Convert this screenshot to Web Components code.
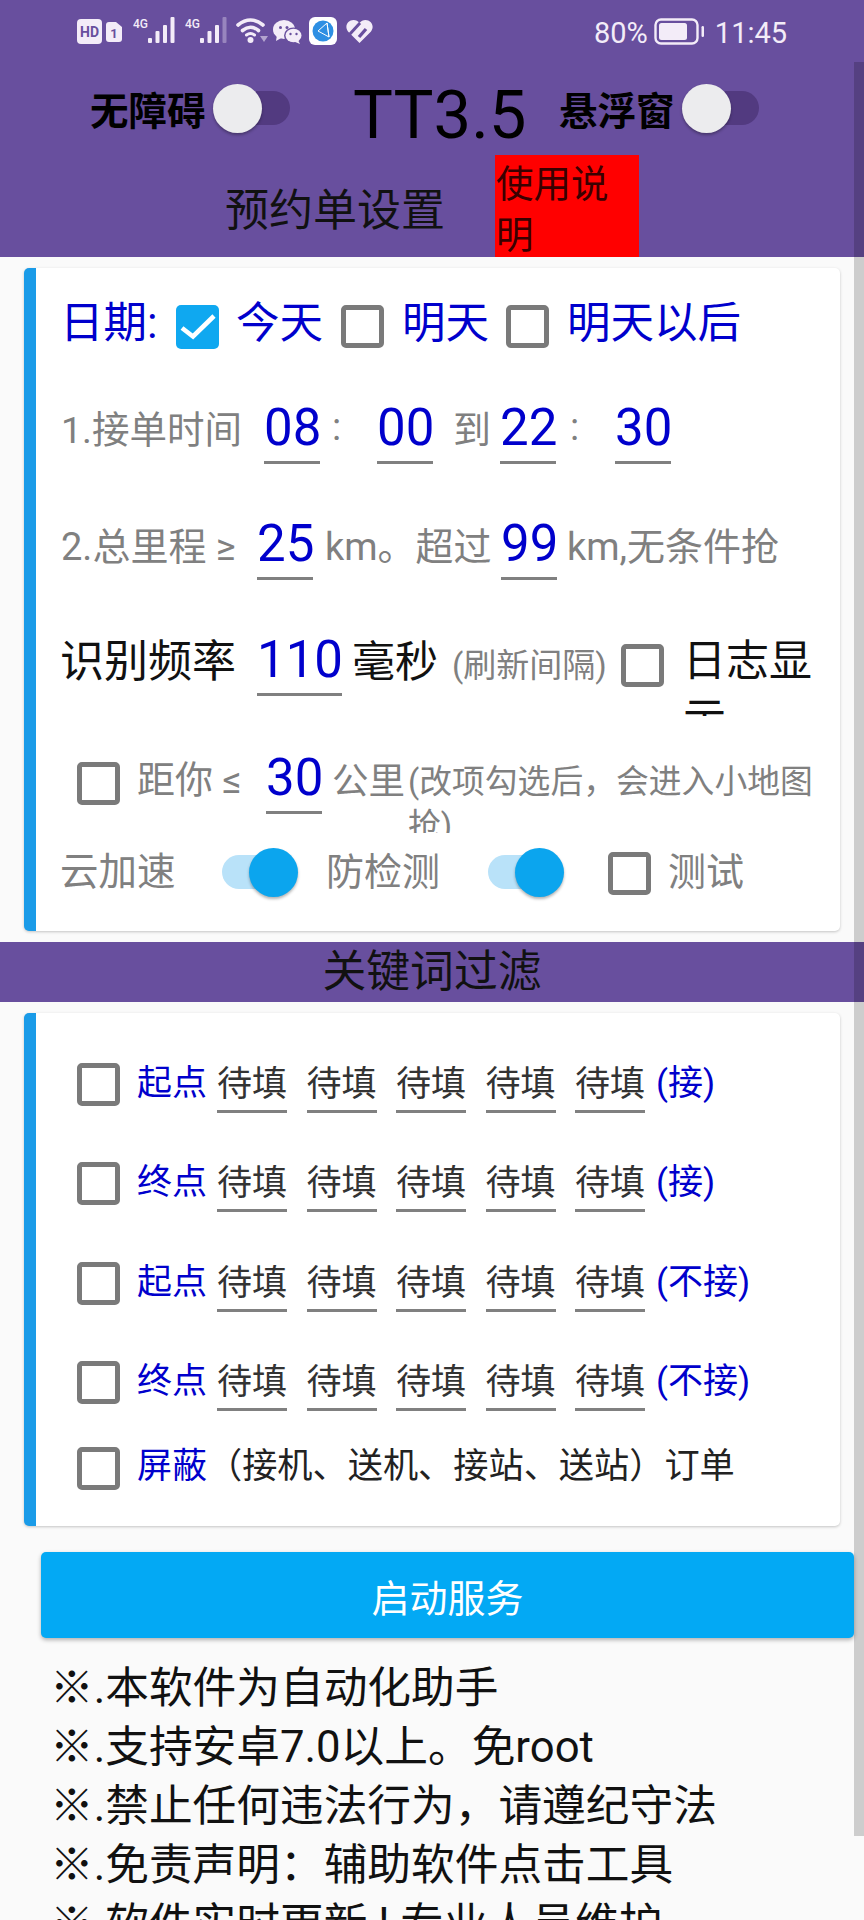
<!DOCTYPE html>
<html lang="zh">
<head>
<meta charset="utf-8">
<title>TT3.5</title>
<style>
  html, body { margin: 0; padding: 0; }
  body {
    width: 864px; height: 1920px; overflow: hidden; background: #fafafa;
    font-family: Roboto, "Noto Sans CJK SC", sans-serif; color: #111;
  }
</style>
</head>
<body>
<app-header></app-header>
<tt-card style="margin-top:11px"><settings-form></settings-form></tt-card>
<section-bar>关键词过滤</section-bar>
<tt-card><filter-form></filter-form></tt-card>
<start-button>启动服务</start-button>
<notice-list>
  <div>※.本软件为自动化助手</div>
  <div>※.支持安卓7.0以上。免root</div>
  <div>※.禁止任何违法行为，请遵纪守法</div>
  <div>※.免责声明：辅助软件点击工具</div>
  <div>※.软件实时更新 ! 专业人员维护</div>
</notice-list>
<scroll-thumb></scroll-thumb>

<script>
class TtSwitch extends HTMLElement {
  connectedCallback() {
    const shadowRoot = this.attachShadow({ mode: 'open' });
    shadowRoot.innerHTML = `
      <style>
        :host { display:block; flex:none; position:relative; width:77px; height:49px; }
        .track { position:absolute; top:7px; left:10px; right:0; height:34px; border-radius:17px; background:#523a80; }
        .thumb { position:absolute; top:0; left:0; width:49px; height:49px; border-radius:50%; background:#ececee; box-shadow:0 2px 3px rgba(0,0,0,.3); }
        :host([checked]) .track { left:0; right:10px; background:#b9e2f9; }
        :host([checked]) .thumb { left:auto; right:0; background:#0ba5ee; }
      </style>
      <div class="track"></div><div class="thumb"></div>`;
  }
}
customElements.define('tt-switch', TtSwitch);

class TtCheck extends HTMLElement {
  connectedCallback() {
    const shadowRoot = this.attachShadow({ mode: 'open' });
    shadowRoot.innerHTML = `
      <style>
        :host { display:block; flex:none; box-sizing:border-box; width:43px; height:43px; border:5px solid #7a7a7a; border-radius:5px; background:#fff; }
        :host([checked]) { border:0; background:#0fa8f0; height:44px; }
        svg { display:block; }
      </style>
      ${this.hasAttribute('checked') ? '<svg width="43" height="44" viewBox="0 0 43 44"><path d="M6 23 L17 31.5 L38 11" fill="none" stroke="#fff" stroke-width="4.6"/></svg>' : ''}`;
  }
}
customElements.define('tt-check', TtCheck);

class TtField extends HTMLElement {
  connectedCallback() {
    const shadowRoot = this.attachShadow({ mode: 'open' });
    shadowRoot.innerHTML = `
      <style>
        :host { display:block; flex:none; width:56px; padding:2px 0 5px; border-bottom:3px solid #808080;
                font-size:51px; line-height:56px; color:#0000cc; text-align:center; white-space:nowrap; }
      </style>
      <slot></slot>`;
  }
}
customElements.define('tt-field', TtField);

class StatusBar extends HTMLElement {
  connectedCallback() {
    const shadowRoot = this.attachShadow({ mode: 'open' });
    const fg = '#f3ecf8', bg = '#684f9e';
    const bars = (faded) => [[1, 5], [8.5, 12], [16, 18], [23.5, 26]].map((b, i) =>
      `<rect x="${b[0]}" y="${26 - b[1]}" width="4" height="${b[1]}" rx="1" fill="${fg}" opacity="${i == 3 && faded ? .35 : 1}"/>`).join('');
    shadowRoot.innerHTML = `
      <style>
        :host { display:flex; align-items:flex-start; height:62px; padding-left:77px; box-sizing:border-box; color:${fg}; }
        svg { display:block; flex:none; }
        .right { font-size:29px; line-height:32px; margin-top:17px; }
        text { font-family:Roboto, sans-serif; }
      </style>
      <svg style="margin-top:19px" width="25" height="25"><rect width="25" height="25" rx="4" fill="${fg}"/><text x="12.5" y="18" font-size="14" font-weight="700" text-anchor="middle" fill="${bg}">HD</text></svg>
      <svg style="margin:22px 0 0 4px" width="16" height="20"><path d="M3 0 H10 L16 5 V17 Q16 20 13 20 H3 Q0 20 0 17 V3 Q0 0 3 0Z" fill="${fg}"/><text x="8" y="16" font-size="13" font-weight="700" text-anchor="middle" fill="${bg}">1</text></svg>
      <svg style="margin:17px 0 0 11px" width="42" height="26"><text x="0" y="11" font-size="12" font-weight="500" fill="${fg}">4G</text><g transform="translate(14,0)">${bars(false)}</g></svg>
      <svg style="margin:17px 0 0 10px" width="42" height="26"><text x="0" y="11" font-size="12" font-weight="500" fill="${fg}">4G</text><g transform="translate(14,0)">${bars(true)}</g></svg>
      <svg style="margin:18px 0 0 9px" width="32" height="25" fill="none" stroke="${fg}" stroke-width="3.6" stroke-linecap="round"><path d="M2 7 Q14.5 -3 27 7"/><path d="M6.5 12.5 Q14.5 6 22.5 12.5"/><path d="M10.5 17 Q14.5 14 18.5 17" stroke-width="3"/><circle cx="14.5" cy="22" r="3" fill="${fg}" stroke="none"/><path d="M24 18 L28 24 L32 18Z" fill="${fg}" stroke="none" opacity=".55"/></svg>
      <svg style="margin:20px 0 0 5px" width="29" height="24"><ellipse cx="11" cy="9.5" rx="11" ry="9.5" fill="${fg}"/><path d="M4 15 L3 21 L10 17Z" fill="${fg}"/><ellipse cx="20.5" cy="15.5" rx="9.5" ry="8" fill="${bg}"/><ellipse cx="20.5" cy="15.5" rx="8" ry="6.8" fill="${fg}"/><path d="M25 20 L27 24 L21 21.5Z" fill="${fg}"/><circle cx="7.5" cy="7.5" r="1.5" fill="${bg}"/><circle cx="14" cy="7.5" r="1.5" fill="${bg}"/><circle cx="17.5" cy="14" r="1.2" fill="${bg}"/><circle cx="23.5" cy="14" r="1.2" fill="${bg}"/></svg>
      <svg style="margin:17px 0 0 7px" width="28" height="28"><rect width="28" height="28" rx="6" fill="#fff"/><circle cx="14" cy="14" r="10.5" fill="#2d8fe3"/><path d="M18 6 L9 14 L20 20 Z M18 6 L20 20" fill="none" stroke="#fff" stroke-width="1"/></svg>
      <svg style="margin:20px 0 0 9px" width="27" height="23"><path d="M13.5 23 L2 11.5 C-2 6 2 0 7.5 0 C10 0 12 1.2 13.5 3 C15 1.2 17 0 19.5 0 C25 0 29 6 25 11.5Z" fill="${fg}"/><path d="M3 15 L14 3" stroke="${bg}" stroke-width="3"/><path d="M13 17 L20 9" stroke="${bg}" stroke-width="3.4"/></svg>
      <span class="right" style="margin-left:221px">80%</span>
      <svg style="margin:18px 0 0 6px" width="50" height="27"><rect x="1.5" y="1.5" width="42" height="24" rx="5.5" fill="none" stroke="${fg}" stroke-width="2.4"/><rect x="5" y="5" width="28" height="17" rx="2.5" fill="${fg}"/><rect x="47.5" y="8" width="2.5" height="11" rx="1.2" fill="${fg}"/></svg>
      <span class="right" style="margin-left:11px">11:45</span>`;
  }
}
customElements.define('status-bar', StatusBar);

class AppHeader extends HTMLElement {
  connectedCallback() {
    const shadowRoot = this.attachShadow({ mode: 'open' });
    shadowRoot.innerHTML = `
      <style>
        :host { display:block; height:257px; background:#684f9e; }
        .row { display:flex; align-items:flex-start; }
        .top { height:93px; padding-left:90px; }
        .label { flex:none; font-size:38.5px; line-height:44px; font-weight:700; color:#000; margin-top:28px; white-space:nowrap; }
        .title { flex:none; font-size:67px; line-height:78px; color:#000; margin-top:14px; width:173px; white-space:nowrap; }
        tt-switch { margin-top:22px; }
        .bottom { height:102px; padding-left:225px; }
        .name { flex:none; width:270px; font-size:44px; line-height:52px; color:#111; margin-top:30px; white-space:nowrap; }
        .help { width:144px; height:102px; background:#ff0000; color:#3a0000; font-size:37.5px; line-height:51px; padding:4px 0 0 1px; box-sizing:border-box; }
      </style>
      <status-bar></status-bar>
      <div class="row top">
        <span class="label" style="width:123px">无障碍</span>
        <tt-switch></tt-switch>
        <span class="title" style="margin-left:63px">TT3.5</span>
        <span class="label" style="width:123px;margin-left:33px">悬浮窗</span>
        <tt-switch></tt-switch>
      </div>
      <div class="row bottom">
        <span class="name">预约单设置</span>
        <div class="help">使用说明</div>
      </div>`;
  }
}
customElements.define('app-header', AppHeader);

class TtCard extends HTMLElement {
  connectedCallback() {
    const shadowRoot = this.attachShadow({ mode: 'open' });
    shadowRoot.innerHTML = `
      <style>
        :host { display:block; margin:0 24px; border-left:12px solid #1a9be8; border-radius:5px; background:#fff; box-shadow:0 1px 3px rgba(0,0,0,.22); }
      </style>
      <slot></slot>`;
  }
}
customElements.define('tt-card', TtCard);

class SettingsForm extends HTMLElement {
  connectedCallback() {
    const shadowRoot = this.attachShadow({ mode: 'open' });
    shadowRoot.innerHTML = `
      <style>
        :host { display:block; padding-top:32px; height:663px; box-sizing:border-box; }
        .row { display:flex; align-items:flex-start; padding-left:26px; }
        span { flex:none; white-space:nowrap; }
        .blue { font-size:43.5px; line-height:50px; color:#0000cc; }
        .gray { font-size:38px; line-height:44px; color:#808080; }
        .dark { font-size:43px; line-height:50px; color:#111; }
        .small { font-size:33px; line-height:40px; color:#808080; }
        .log { flex:none; width:130px; height:84px; overflow:hidden; font-size:43px; line-height:58px; color:#111; }
        .tip { flex:none; width:410px; height:73px; overflow:hidden; font-size:32.8px; line-height:44px; color:#808080; }
      </style>
      <div class="row" style="height:62px">
        <span class="blue" style="margin-left:-2px;width:99px;margin-top:-1px">日期:</span>
        <tt-check checked style="margin:5px 0 0 17px"></tt-check>
        <span class="blue" style="margin:-1px 0 0 17px;width:87px">今天</span>
        <tt-check style="margin:5px 0 0 18px"></tt-check>
        <span class="blue" style="margin:-1px 0 0 18px;width:87px">明天</span>
        <tt-check style="margin:5px 0 0 17px"></tt-check>
        <span class="blue" style="margin:-1px 0 0 18px">明天以后</span>
      </div>
      <div class="row" style="height:148px">
        <span class="gray" style="margin-left:-1px;width:203px;margin-top:46px;font-size:37.5px">1.接单时间</span>
        <tt-field style="margin-top:36px">08</tt-field>
        <span class="gray" style="margin:43px 0 0 12px;width:10px">:</span>
        <tt-field style="margin:36px 0 0 35px">00</tt-field>
        <span class="gray" style="margin:46px 0 0 20px;width:37px">到</span>
        <tt-field style="margin:36px 0 0 10px">22</tt-field>
        <span class="gray" style="margin:43px 0 0 14px;width:10px">:</span>
        <tt-field style="margin:36px 0 0 35px">30</tt-field>
      </div>
      <div class="row" style="height:116px">
        <span class="gray" style="margin-left:-1px;width:196px;margin-top:15px">2.总里程 ≥</span>
        <tt-field style="margin-top:4px">25</tt-field>
        <span class="gray" style="margin:15px 0 0 12px;width:176px">km。超过</span>
        <tt-field style="margin-top:4px">99</tt-field>
        <span class="gray" style="margin:15px 0 0 10px">km,无条件抢</span>
      </div>
      <div class="row" style="height:120px">
        <span class="dark" style="margin-left:-2px;width:197px;margin-top:11px;font-size:44px">识别频率</span>
        <tt-field style="margin-top:4px;width:85px">110</tt-field>
        <span class="dark" style="margin:11px 0 0 10px;width:86px">毫秒</span>
        <span class="small" style="margin:20px 0 0 14px;width:169px">(刷新间隔)</span>
        <tt-check style="margin-top:18px"></tt-check>
        <div class="log" style="margin:6px 0 0 19px">日志显示</div>
      </div>
      <div class="row" style="height:94px">
        <tt-check style="margin:16px 0 0 15px"></tt-check>
        <span class="gray" style="margin:12px 0 0 17px;width:129px">距你 ≤</span>
        <tt-field style="margin-top:2px">30</tt-field>
        <span class="gray" style="margin:14px 0 0 10px;width:76px;font-size:36.5px">公里</span>
        <div class="tip" style="margin-top:14px">(改项勾选后，会进入小地图抢)</div>
      </div>
      <div class="row">
        <span class="gray" style="margin-left:-2px;width:162px;margin-top:10px;font-size:38.5px">云加速</span>
        <tt-switch checked style="margin-top:8px;width:76px"></tt-switch>
        <span class="gray" style="margin:10px 0 0 28px;width:162px">防检测</span>
        <tt-switch checked style="margin-top:8px;width:76px"></tt-switch>
        <tt-check style="margin:12px 0 0 44px"></tt-check>
        <span class="gray" style="margin:10px 0 0 17px">测试</span>
      </div>`;
  }
}
customElements.define('settings-form', SettingsForm);

class SectionBar extends HTMLElement {
  connectedCallback() {
    const shadowRoot = this.attachShadow({ mode: 'open' });
    shadowRoot.innerHTML = `
      <style>
        :host { display:flex; align-items:center; justify-content:center; height:60px; margin:11px 0; background:#684f9e; color:#111; font-size:43.8px; line-height:60px; }
      </style>
      <slot></slot>`;
  }
}
customElements.define('section-bar', SectionBar);

class FilterForm extends HTMLElement {
  connectedCallback() {
    const shadowRoot = this.attachShadow({ mode: 'open' });
    const row = (name, tail, h) => `
      <div class="row" style="height:${h}px">
        <tt-check></tt-check>
        <span class="blue" style="margin-left:17px;width:70px;margin-top:1px">${name}</span>
        <div class="fields">${'<tt-field>待填</tt-field>'.repeat(5)}</div>
        <span class="blue" style="margin:1px 0 0 11px">${tail}</span>
      </div>`;
    shadowRoot.innerHTML = `
      <style>
        :host { display:block; padding:50px 0 0 41px; height:513px; box-sizing:border-box; }
        .row { display:flex; align-items:flex-start; }
        span { flex:none; white-space:nowrap; font-size:35px; line-height:40px; }
        .blue { color:#0000cc; }
        .plain { color:#222; margin-top:-1px; font-size:35.2px; }
        .fields { display:flex; gap:19.5px; margin-left:10px; }
        tt-field { width:70px; padding:2px 0 5px; font-size:35px; line-height:40px; color:#333; }
      </style>
      ${row('起点', '(接)', 99.3)}${row('终点', '(接)', 99.3)}${row('起点', '(不接)', 99.3)}${row('终点', '(不接)', 86)}
      <div class="row">
        <tt-check></tt-check>
        <span class="blue" style="margin-left:17px;width:70px">屏蔽</span>
        <span class="plain">（接机、送机、接站、送站）订单</span>
      </div>`;
  }
}
customElements.define('filter-form', FilterForm);

class StartButton extends HTMLElement {
  connectedCallback() {
    const shadowRoot = this.attachShadow({ mode: 'open' });
    shadowRoot.innerHTML = `
      <style>
        :host { display:flex; align-items:center; justify-content:center; width:813px; height:86px; margin:26px 0 0 41px; border-radius:5px;
                background:#03a9f4; color:#fff; font-size:38px; box-shadow:0 2px 4px rgba(0,0,0,.3); }
      </style>
      <slot></slot>`;
  }
}
customElements.define('start-button', StartButton);

class NoticeList extends HTMLElement {
  connectedCallback() {
    const shadowRoot = this.attachShadow({ mode: 'open' });
    shadowRoot.innerHTML = `
      <style>
        :host { display:block; margin:21px 0 0 50px; font-size:43.7px; line-height:59px; color:#111; white-space:nowrap; }
      </style>
      <slot></slot>`;
  }
}
customElements.define('notice-list', NoticeList);

class ScrollThumb extends HTMLElement {
  connectedCallback() {
    const shadowRoot = this.attachShadow({ mode: 'open' });
    shadowRoot.innerHTML = `
      <style>
        :host { position:fixed; top:62px; right:0; width:10px; height:1774px; background:rgba(0,0,0,.18); }
      </style>`;
  }
}
customElements.define('scroll-thumb', ScrollThumb);
</script>
</body>
</html>
